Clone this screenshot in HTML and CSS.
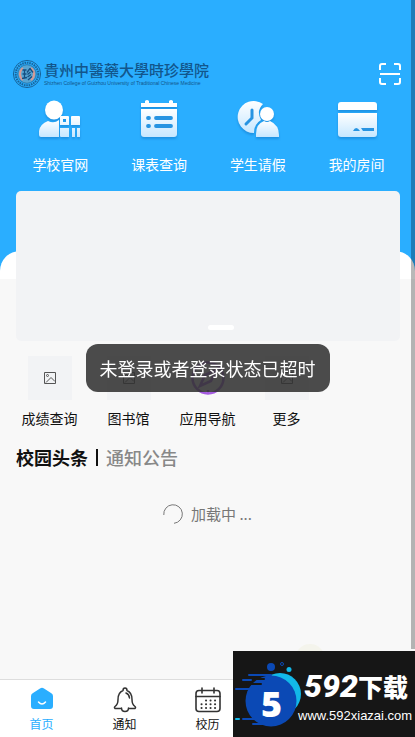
FILE: index.html
```html
<!DOCTYPE html>
<html lang="zh-CN">
<head>
    <meta charset="UTF-8">
    <meta name="viewport" content="width=device-width, initial-scale=1.0">
    <title>首页</title>
    <link rel="stylesheet" href="styles.css">
</head>
<body>
    <header class="hero">
        <div class="brand-row">
            <a class="brand" href="#">
                <svg class="seal" viewBox="0 0 30 30">
                    <circle cx="15" cy="15" r="13.6" fill="none" stroke="#17659c" stroke-width="1"/>
                    <circle cx="15" cy="15" r="11.3" fill="none" stroke="#17659c" stroke-width="2" stroke-dasharray="1.6 .8"/>
                    <circle cx="15" cy="15" r="9.3" fill="#56a5d3" stroke="#17659c" stroke-width=".7"/>
                    <path d="M11 9c-4 3-4 9 0 12M19 9c4 3 4 9 0 12" fill="none" stroke="#d99a94" stroke-width="2"/>
                    <path d="M10.5 11h4M10.5 15h4M10 19.5l5-1M12.5 11v8M18 9.500l-3 4M18 9.500l3 4M18.500 13l-3 2.500M19 15.500l-3.500 2.500M20 17.500l-4 3.500" fill="none" stroke="#164f80" stroke-width="1.300"/>
                </svg>
                <span class="brand-text">
                    <span class="brand-name" lang="zh-TW">貴州中醫藥大學時珍學院</span>
                    <span class="brand-en">Shizhen College of Guizhou University of Traditional Chinese Medicine</span>
                </span>
            </a>
            <button class="scan-btn" aria-label="扫一扫">
                <svg width="22" height="22" viewBox="0 0 22 22" fill="none" stroke="#fff" stroke-width="2">
                    <path d="M1 7V3q0-2 2-2h4M15 1h4q2 0 2 2v4M21 15v4q0 2-2 2h-4M7 21H3q-2 0-2-2v-4M1 11h20"/>
                </svg>
            </button>
        </div>

        <nav class="main-menu">
            <a href="#">
                <svg class="menu-icon" viewBox="0 0 46 42">
                    <defs>
                        <linearGradient id="fade" x1="0" y1="0" x2="0" y2="1">
                            <stop offset="0" stop-color="#fff"/>
                            <stop offset="1" stop-color="#c6e7ff"/>
                        </linearGradient>
                    </defs>
                    <ellipse cx="17" cy="10" rx="9" ry="9.500" fill="#fff"/>
                    <path d="M2 35v-4q1-7 9-10 6 3 11-1v17H4q-2 0-2-2z" fill="url(#fade)"/>
                    <path d="M24 16h7q1 0 1 1v8h-9v-8q0-1 1-1zm2 3v3h3v-3zM35 16h7q1 0 1 1v8h-9v-8q0-1 1-1zM23 28h9v9h-8q-1 0-1-1zM35 28h3v9h-3zM40 28h3v9h-3z" fill="url(#fade)" fill-rule="evenodd"/>
                </svg>
                <span>学校官网</span>
            </a>
            <a href="#">
                <svg class="menu-icon" viewBox="0 0 46 42">
                    <path d="M5 3h4V1q2-2 4 0v2h20V1q2-2 4 0v2h4v4H5z" fill="#fff"/>
                    <path d="M5 9h36v25q0 3-3 3H8q-3 0-3-3z" fill="url(#fade)"/>
                    <path d="M12 18h1M12 26h1M20 18h15M20 26h15" stroke="#2794e2" stroke-width="3.800" stroke-linecap="round"/>
                </svg>
                <span>课表查询</span>
            </a>
            <a href="#">
                <svg class="menu-icon" viewBox="0 0 46 42">
                    <path d="M28 4A16 16 0 1 0 19 33q0-9 7-13-5-9 2-16z" fill="url(#fade)"/>
                    <path d="M17 10v8l-6 6" fill="none" stroke="#2794e2" stroke-width="3" stroke-linecap="round"/>
                    <circle cx="32" cy="14" r="7" fill="#fff"/>
                    <path d="M21 37v-3q0-10 8-13 3 2 6 0 9 4 9 14v2z" fill="url(#fade)"/>
                </svg>
                <span>学生请假</span>
            </a>
            <a href="#">
                <svg class="menu-icon" viewBox="0 0 46 42">
                    <path d="M4 10V5q0-3 3-3h33q3 0 3 3v5z" fill="#fff"/>
                    <path d="M4 13h39v21q0 3-3 3H7q-3 0-3-3z" fill="url(#fade)"/>
                    <path d="M19 31q3-6 7 0zM27 28h13v3h-11z" fill="#2794e2"/>
                </svg>
                <span>我的房间</span>
            </a>
        </nav>
    </header>

    <main class="content">
        <section class="banner"><span class="banner-dot"></span></section>

        <nav class="shortcuts">
            <a href="#">
                <span class="thumb">
                    <svg width="12" height="12" viewBox="0 0 12 12" fill="none" stroke="#555"><path d="M.5.5h11v11H.5zM2 10.500l5-5 4 4"/><circle cx="3.500" cy="3.500" r="1"/></svg>
                </span>
                <span>成绩查询</span>
            </a>
            <a href="#">
                <span class="thumb">
                    <svg width="12" height="12" viewBox="0 0 12 12" fill="none" stroke="#555"><path d="M.5.5h11v11H.5zM2 10.500l5-5 4 4"/><circle cx="3.500" cy="3.500" r="1"/></svg>
                </span>
                <span>图书馆</span>
            </a>
            <a href="#">
                <span class="thumb thumb-plain">
                    <svg width="36" height="36" viewBox="0 0 36 36" fill="none" stroke="#a45be0" stroke-width="2.500">
                        <circle cx="18" cy="18" r="15.500"/>
                        <path d="M26 10l-5 11-11 5 5-11zM18 30v4"/>
                    </svg>
                </span>
                <span>应用导航</span>
            </a>
            <a href="#">
                <span class="thumb">
                    <svg width="12" height="12" viewBox="0 0 12 12" fill="none" stroke="#555"><path d="M.5.5h11v11H.5zM2 10.500l5-5 4 4"/><circle cx="3.500" cy="3.500" r="1"/></svg>
                </span>
                <span>更多</span>
            </a>
        </nav>

        <div class="news-tabs">
            <button class="news-tab active">校园头条</button>
            <span class="divider"></span>
            <button class="news-tab">通知公告</button>
        </div>

        <div class="loading">
            <svg width="20" height="20" viewBox="0 0 20 20" fill="none" stroke="#777">
                <path d="M.8 11A9.300 9.300 0 1 1 11 19.300"/>
            </svg>
            <span>加载中 ...</span>
        </div>
    </main>

    <footer class="tabbar">
        <a class="tab active" href="#">
            <svg width="24" height="24" viewBox="0 0 24 24">
                <path d="M10 1.500q2-1.500 4 0l7 4.500q2 1.200 2 3v10q0 3-3 3H4q-3 0-3-3V9q0-1.800 2-3z" fill="#2aaeff"/>
                <path d="M8.500 15q3.500 4 7 0" fill="none" stroke="#fff" stroke-width="1.500" stroke-linecap="round"/>
            </svg>
            <span>首页</span>
        </a>
        <a class="tab" href="#">
            <svg width="24" height="26" viewBox="0 0 24 26" fill="none" stroke="#333" stroke-width="1.500" stroke-linejoin="round" stroke-linecap="round">
                <path d="M8.500 21.500H2q-1-1 0-2 3-2 3-7 0-7 5-9 0-2.500 2-2.500t2 2.500q5 2 5 9 0 5 3 7 1 1 0 2h-6.500M8.500 21q0 3.500 3.500 3.500t3.500-3.500M13 6q3 1 3.500 5"/>
            </svg>
            <span>通知</span>
        </a>
        <a class="tab" href="#">
            <svg width="26" height="26" viewBox="0 0 26 26" fill="none" stroke="#333" stroke-width="1.600" stroke-linecap="round">
                <rect x="1" y="3.500" width="24" height="21" rx="3"/>
                <path d="M1 9.500h24M7 1v5M19 1v5"/>
                <path d="M11 13.500h.1M15.500 13.500h.1M20 13.500h.1M6.500 17.300h.1M11 17.300h.1M15.500 17.300h.1M20 17.300h.1M6.500 21h.1M11 21h.1M15.500 21h.1M20 21h.1" stroke-width="2"/>
            </svg>
            <span>校历</span>
        </a>
        <span class="tab-bump"></span>
    </footer>

    <div class="toast" role="alert">未登录或者登录状态已超时</div>
    <div class="scroll-track"></div>

    <aside class="site-badge">
        <svg width="68" height="66" viewBox="0 0 68 66">
            <circle cx="45" cy="33" r="21" fill="#12b8e8"/>
            <circle cx="36" cy="40" r="25.500" fill="#0b49b5"/>
            <circle cx="36" cy="6" r="4" fill="#0b49b5"/>
            <circle cx="47" cy="3" r="1.500" fill="none" stroke="#0b49b5"/>
            <circle cx="54" cy="8.500" r="2.500" fill="#12b8e8"/>
            <path d="M14 14h22M8 19h8M1 28h22M8 58h18M18 63h20" stroke="#0b49b5" stroke-width="2" stroke-linecap="round"/>
            <path d="M20 18h9M12 23h14" stroke="#161616" stroke-width="2" stroke-linecap="round"/>
            <path d="M1 58h3" stroke="#12b8e8" stroke-width="2" stroke-linecap="round"/>
            <text class="badge-num" x="26" y="56">5</text>
        </svg>
        <div class="badge-text">
            <div class="badge-title"><span class="badge-digits">592</span><span>下载</span></div>
            <div class="badge-url">www.592xiazai.com</div>
        </div>
    </aside>
</body>
</html>
```

FILE: styles.css
```css
* {
    box-sizing: border-box;
}

body {
    margin: 0;
    min-height: 100vh;
    display: flex;
    flex-direction: column;
    background: #f8f8f8;
    color: #111;
    font-family: "Noto Sans CJK SC", sans-serif;
    font-size: 14px;
    line-height: 20px;
}

a {
    color: inherit;
    text-decoration: none;
}

button {
    padding: 0;
    border: none;
    background: none;
    font: inherit;
    color: inherit;
    cursor: pointer;
}

svg {
    display: block;
}

/* Header */
.hero {
    position: relative;
    padding: 59px 0 105px;
    background: #2aaeff;
}

.hero::after {
    content: "";
    position: absolute;
    left: 0;
    right: 0;
    bottom: 0;
    height: 28px;
    background: white;
    border-radius: 20px 20px 0 0;
}

.brand-row {
    display: flex;
    justify-content: space-between;
    align-items: center;
    padding: 0 14px 0 12px;
}

.brand {
    display: flex;
    align-items: center;
    gap: 2px;
    color: #12568c;
}

.seal {
    width: 30px;
    height: 30px;
}

.brand-name,
.brand-en {
    display: block;
    white-space: nowrap;
}

.brand-name {
    font-family: "Noto Sans CJK TC", sans-serif;
    font-size: 15px;
    font-weight: 500;
    line-height: 18px;
}

.brand-en {
    font-family: "Liberation Sans", sans-serif;
    font-size: 5px;
    line-height: 8px;
}

.main-menu {
    display: grid;
    grid-template-columns: repeat(4, 1fr);
    padding: 11px 9px 0 11px;
    color: white;
}

.main-menu a {
    display: flex;
    flex-direction: column;
    align-items: center;
    gap: 12px;
}

.menu-icon {
    width: 46px;
    height: 42px;
    filter: drop-shadow(0 2px 1px rgba(0, 80, 160, 0.3));
}

/* Content */
.content {
    flex: 1;
}

.banner {
    position: relative;
    z-index: 1;
    display: flex;
    justify-content: center;
    align-items: flex-end;
    height: 150px;
    margin: -88px 15px 0 16px;
    padding: 0 0 11px 26px;
    border-radius: 5px;
    background: #f2f3f5;
}

.banner-dot {
    width: 26px;
    height: 5px;
    border-radius: 3px;
    background: white;
}

.shortcuts {
    display: grid;
    grid-template-columns: repeat(5, 1fr);
    padding: 15px 10px 0;
}

.shortcuts a {
    display: flex;
    flex-direction: column;
    align-items: center;
    gap: 8px;
}

.thumb {
    display: flex;
    justify-content: center;
    align-items: center;
    width: 44px;
    height: 44px;
    background: #f2f3f5;
}

.thumb-plain {
    background: none;
}

.news-tabs {
    display: flex;
    align-items: center;
    gap: 8px;
    padding: 16px 16px 0;
}

.news-tab {
    color: #888;
    font-size: 18px;
    font-weight: 500;
    line-height: 26px;
}

.news-tab.active {
    color: #111;
    font-weight: bold;
}

.divider {
    width: 2px;
    height: 17px;
    background: #111;
}

.loading {
    display: flex;
    justify-content: center;
    align-items: center;
    gap: 8px;
    padding-top: 33px;
    color: #777;
    font-size: 15px;
    line-height: 22px;
}

/* Bottom bar */
.tabbar {
    position: relative;
    display: grid;
    grid-template-columns: repeat(5, 1fr);
    height: 58px;
    padding-top: 7px;
    border-top: 1px solid #ddd;
    background: white;
}

.tab {
    display: flex;
    flex-direction: column;
    align-items: center;
    justify-content: space-between;
    height: 46px;
    font-size: 12px;
    line-height: 18px;
}

.tab.active {
    color: #2aaeff;
}

.tab-bump {
    position: absolute;
    top: -36px;
    right: 90px;
    width: 30px;
    height: 30px;
    border-radius: 50%;
    background: #f4f4ec;
}

/* Overlays */
.toast {
    position: fixed;
    z-index: 5;
    top: 344px;
    left: 50%;
    transform: translateX(-50%);
    padding: 11px 14px;
    border-radius: 12px;
    background: rgba(50, 50, 50, 0.88);
    color: white;
    font-size: 18px;
    line-height: 26px;
    white-space: nowrap;
}

.scroll-track {
    position: fixed;
    z-index: 4;
    top: 0;
    right: 0;
    bottom: 88px;
    width: 4px;
    background: rgba(0, 0, 0, 0.28);
}

.site-badge {
    position: fixed;
    z-index: 6;
    right: 0;
    bottom: 0;
    display: flex;
    align-items: center;
    width: 182px;
    height: 86px;
    padding-left: 2px;
    background: #161616;
    color: white;
}

.site-badge svg {
    flex: none;
}

.badge-num {
    fill: white;
    font-family: "Noto Sans", sans-serif;
    font-size: 36px;
    font-weight: 900;
}

.badge-text {
    margin-left: -5px;
    padding-top: 8px;
}

.badge-title {
    display: flex;
    align-items: center;
    padding-left: 6px;
    font-size: 25px;
    font-weight: 900;
    line-height: 36px;
}

.badge-digits {
    font-family: "Roboto", sans-serif;
    font-size: 32px;
    font-style: italic;
}

.badge-url {
    font-family: "Liberation Sans", sans-serif;
    font-size: 13px;
    line-height: 24px;
}
```
